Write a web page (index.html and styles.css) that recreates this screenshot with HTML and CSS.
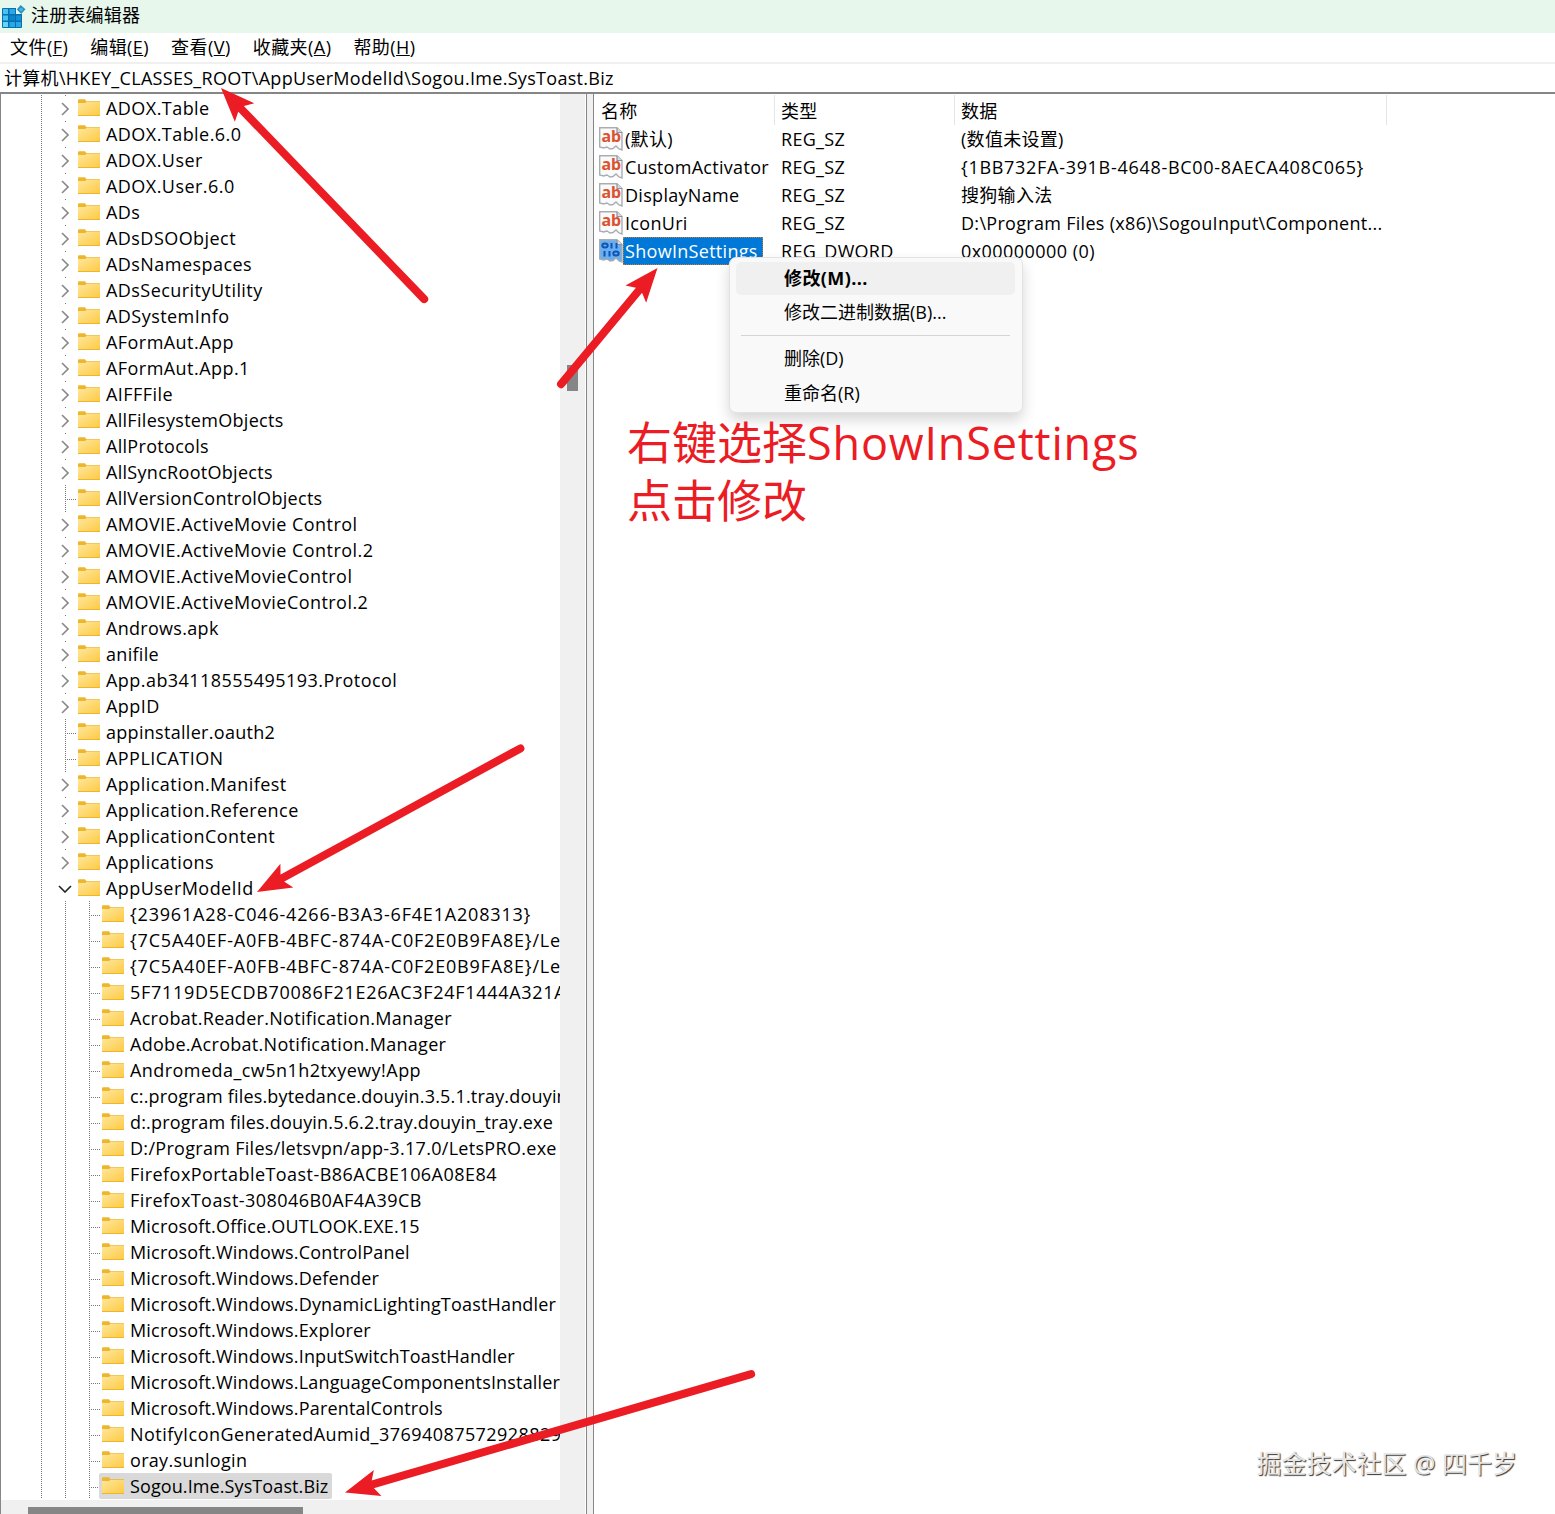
FILE: index.html
```html
<!DOCTYPE html>
<html lang="zh-CN">
<head>
    <meta charset="UTF-8">
    <meta name="viewport" content="width=device-width, initial-scale=1.0">
    <title>注册表编辑器</title>
    <link rel="stylesheet" href="styles.css">
</head>
<body>
    <svg class="defs" width="0" height="0">
        <defs>
            <linearGradient id="folder-fill" x1="0" y1="0" x2="1" y2="1">
                <stop offset="0" stop-color="#ffe79c" />
                <stop offset="1" stop-color="#fdca45" />
            </linearGradient>
            <symbol id="folder" viewBox="0 0 22 17">
                <path d="M0 1.5Q0 .3 1 .3H7L8.500 2.2H22V17H0Z" fill="#edb62c" />
                <path d="M0 4H7L8.500 3H22V16H0Z" fill="url(#folder-fill)" />
            </symbol>
            <symbol id="paper" viewBox="0 0 24 24">
                <path d="M.7 .7H18L23 5.5V23L20 22 17 19 14 21.5 11 22 8 20 4.5 21 .7 20Z" fill="currentColor" stroke="#a9adb2" stroke-width="1.4" />
                <path d="M18 1V5.5H23" fill="#ddd" stroke="#8e9398" stroke-width="1.2" />
            </symbol>
        </defs>
    </svg>

    <!-- 标题栏 -->
    <header class="titlebar">
        <svg class="app-icon" width="24" height="24" viewBox="0 0 24 24">
            <rect x="0" y="3" width="20" height="20" rx="1" fill="#0a6fb0" />
            <path d="M1 4H6V9H1ZM1 10.500H6V15.500H1Z" fill="#46c3f2" />
            <path d="M7.500 4H13V9H7.500ZM7.500 17H13V22H7.500ZM14 17H19V22H14Z" fill="#27a9e8" />
            <path d="M7.500 10.500H13V15.500H7.500Z" fill="#0c86cb" />
            <path d="M14 10.500H19V15.500H14Z" fill="#1291d6" />
            <path d="M1 17H6V22H1Z" fill="#62d6f8" />
            <path d="M14 2H21V9H14Z" fill="#e8f7ec" />
            <path d="M18.700 0L23.500 4.300 19.200 9 14.800 4.500Z" fill="#2b8fc2" />
            <path d="M19 2.500L21.300 4.500 19.200 6.500 17 4.500Z" fill="#4db9e2" />
        </svg>
        <h1>注册表编辑器</h1>
    </header>
    <nav class="menubar">
        <span>文件(<u>F</u>)</span>
        <span>编辑(<u>E</u>)</span>
        <span>查看(<u>V</u>)</span>
        <span>收藏夹(<u>A</u>)</span>
        <span>帮助(<u>H</u>)</span>
    </nav>
    <div class="address">计算机\HKEY_CLASSES_ROOT\AppUserModelId\Sogou.Ime.SysToast.Biz</div>

    <main>
        <!-- 左侧树 -->
        <section class="tree-pane">
            <div class="tree-body">
                <div id="tree"></div>
                <div class="scroll-v"><div class="thumb"></div></div>
            </div>
            <div class="scroll-h"><div class="thumb"></div></div>
        </section>
        <div class="splitter"></div>

        <!-- 右侧列表 -->
        <section class="values">
            <div class="row head"><span>名称</span><span>类型</span><span>数据</span></div>
            <div id="values"></div>

            <!-- 右键菜单 -->
            <div class="context-menu">
                <div class="item active">修改(M)...</div>
                <div class="item">修改二进制数据(B)...</div>
                <hr>
                <div class="item">删除(D)</div>
                <div class="item">重命名(R)</div>
            </div>
            <p class="note">右键选择<span class="note-latin">ShowInSettings</span><br>点击修改</p>
            <div class="watermark">掘金技术社区 @ 四千岁</div>
        </section>
    </main>

    <!-- 红色箭头 -->
    <svg class="arrows" width="1555" height="1514" viewBox="0 0 1555 1514">
        <g transform="translate(221 88) rotate(46.1)"><path d="M0 0L34-13.500 29-4V4L34 13.500Z" /><path d="M27 0H293" /></g>
        <g transform="translate(657.500 268) rotate(129.700)"><path d="M0 0L34-13.500 29-4V4L34 13.500Z" /><path d="M27 0H151" /></g>
        <g transform="translate(257 892) rotate(-28.600)"><path d="M0 0L34-13.500 29-4V4L34 13.500Z" /><path d="M27 0H300" /></g>
        <g transform="translate(345 1492.500) rotate(-16.250)"><path d="M0 0L34-13.500 29-4V4L34 13.500Z" /><path d="M27 0H423" /></g>
    </svg>

    <script>
        // '>' 可展开, 'v' 已展开, '-' 无子项
        const keys = [
            ['>', 'ADOX.Table'], ['>', 'ADOX.Table.6.0'], ['>', 'ADOX.User'], ['>', 'ADOX.User.6.0'],
            ['>', 'ADs'], ['>', 'ADsDSOObject'], ['>', 'ADsNamespaces'], ['>', 'ADsSecurityUtility'],
            ['>', 'ADSystemInfo'], ['>', 'AFormAut.App'], ['>', 'AFormAut.App.1'], ['>', 'AIFFFile'],
            ['>', 'AllFilesystemObjects'], ['>', 'AllProtocols'], ['>', 'AllSyncRootObjects'],
            ['-', 'AllVersionControlObjects'], ['>', 'AMOVIE.ActiveMovie Control'],
            ['>', 'AMOVIE.ActiveMovie Control.2'], ['>', 'AMOVIE.ActiveMovieControl'],
            ['>', 'AMOVIE.ActiveMovieControl.2'], ['>', 'Androws.apk'], ['>', 'anifile'],
            ['>', 'App.ab34118555495193.Protocol'], ['>', 'AppID'], ['-', 'appinstaller.oauth2'],
            ['-', 'APPLICATION'], ['>', 'Application.Manifest'], ['>', 'Application.Reference'],
            ['>', 'ApplicationContent'], ['>', 'Applications'], ['v', 'AppUserModelId']
        ];
        const children = [
            '{23961A28-C046-4266-B3A3-6F4E1A208313}',
            '{7C5A40EF-A0FB-4BFC-874A-C0F2E0B9FA8E}/Len',
            '{7C5A40EF-A0FB-4BFC-874A-C0F2E0B9FA8E}/Len',
            '5F7119D5ECDB70086F21E26AC3F24F1444A321A',
            'Acrobat.Reader.Notification.Manager',
            'Adobe.Acrobat.Notification.Manager',
            'Andromeda_cw5n1h2txyewy!App',
            'c:.program files.bytedance.douyin.3.5.1.tray.douyin',
            'd:.program files.douyin.5.6.2.tray.douyin_tray.exe',
            'D:/Program Files/letsvpn/app-3.17.0/LetsPRO.exe',
            'FirefoxPortableToast-B86ACBE106A08E84',
            'FirefoxToast-308046B0AF4A39CB',
            'Microsoft.Office.OUTLOOK.EXE.15',
            'Microsoft.Windows.ControlPanel',
            'Microsoft.Windows.Defender',
            'Microsoft.Windows.DynamicLightingToastHandler',
            'Microsoft.Windows.Explorer',
            'Microsoft.Windows.InputSwitchToastHandler',
            'Microsoft.Windows.LanguageComponentsInstaller',
            'Microsoft.Windows.ParentalControls',
            'NotifyIconGeneratedAumid_37694087572928829',
            'oray.sunlogin',
            'Sogou.Ime.SysToast.Biz'
        ];
        const folder = '<svg class="folder" width="22" height="17"><use href="#folder"/></svg>';
        const arrows = {
            '>': '<span class="guide closed"><svg width="8" height="14" viewBox="0 0 8 14"><path d="M1 1L7 7 1 13"/></svg></span>',
            'v': '<span class="guide open"><svg width="14" height="8" viewBox="0 0 14 8"><path d="M1 1L7 7 13 1"/></svg></span>',
            '-': '<span class="guide line leaf"></span>'
        };
        // 字距: 数字和大写较多的项略宽, 小写较多的项略窄
        function spacing(name) {
            if (/^\{/.test(name)) return ' guid';
            if (/^5F/.test(name)) return ' hash';
            if (/^(Microsoft|Sogou|[cd]:)/.test(name)) return ' narrow';
            if (/^(AD|AM|App|AP|AF|AI|Firefox|Notify|Andromeda)/.test(name)) return ' wide';
            return '';
        }
        let html = '';
        for (const [type, name] of keys) {
            html += `<div class="key"><span class="guide line"></span>${arrows[type]}<span class="label${spacing(name)}">${folder}${name}</span></div>`;
        }
        for (const name of children) {
            const selected = name.startsWith('Sogou') ? ' selected' : '';
            html += `<div class="key"><span class="guide line"></span><span class="guide line"></span><span class="guide line leaf"></span><span class="label${selected}${spacing(name)}">${folder}${name}</span></div>`;
        }
        document.getElementById('tree').innerHTML = html;

        const values = [
            ['(默认)', 'REG_SZ', '(数值未设置)'],
            ['CustomActivator', 'REG_SZ', '{1BB732FA-391B-4648-BC00-8AECA408C065}'],
            ['DisplayName', 'REG_SZ', '搜狗输入法'],
            ['IconUri', 'REG_SZ', 'D:\\Program Files (x86)\\SogouInput\\Component...'],
            ['ShowInSettings', 'REG_DWORD', '0x00000000 (0)']
        ];
        document.getElementById('values').innerHTML = values.map(([name, type, data]) => {
            const dword = type === 'REG_DWORD';
            const mark = dword
                ? '<g class="bits"><ellipse cx="6" cy="6.500" rx="2.700" ry="2"/><path d="M12.500 4V9.500M17.500 4V9.500M5.500 12V17.500M10.500 12V17.500"/><ellipse cx="17" cy="14.500" rx="2.700" ry="2"/></g>'
                : '<text x="2.500" y="15">ab</text>';
            return `<div class="row${dword ? ' selected' : ''}"><span class="name"><svg class="${dword ? 'num' : 'str'}" width="24" height="24" viewBox="0 0 24 24"><use href="#paper"/>${mark}</svg><b>${name}</b></span><span>${type}</span><span class="${data[0] === '{' ? 'hash' : dword ? 'wide' : ''}">${data}</span></div>`;
        }).join('');
    </script>
</body>
</html>
```
FILE: styles.css
```css
* {
    box-sizing: border-box;
}

body {
    margin: 0;
    height: 1514px;
    display: flex;
    flex-direction: column;
    position: relative;
    overflow: hidden;
    background-color: white;
    color: #000;
    font-family: "Open Sans", "Noto Sans CJK SC", sans-serif;
    font-size: 18px;
    letter-spacing: 0.3px;
    white-space: nowrap;
}

.defs {
    position: absolute;
}

.titlebar {
    display: flex;
    align-items: center;
    gap: 5px;
    height: 33px;
    padding-left: 2px;
    background-color: #e8f7ec;
}

h1 {
    margin: 0;
    padding-bottom: 3px;
    font-size: 18px;
    font-weight: 400;
    letter-spacing: 0.2px;
    line-height: 30px;
}

.menubar {
    display: flex;
    gap: 22px;
    height: 29px;
    padding-left: 10px;
    line-height: 29px;
    letter-spacing: 0.45px;
}

.address {
    height: 32px;
    padding-left: 4px;
    line-height: 29px;
    border-top: 2px solid #f0f0f0;
    border-bottom: 2px solid #868686;
}

main {
    flex: 1;
    display: flex;
    min-height: 0;
}

/* 树 */
.tree-pane {
    width: 586px;
    border-left: 1px solid #868686;
    display: flex;
    flex-direction: column;
}

.tree-body {
    display: flex;
    height: 1406px;
}

#tree {
    width: 559px;
    padding-top: 1px;
    overflow: hidden;
}

.scroll-v {
    width: 25px;
    padding: 271px 7px 0;
    background-color: #f0f0f0;
}

.scroll-v .thumb {
    width: 11px;
    height: 26px;
    background-color: #868686;
}

.scroll-h {
    flex: 1;
    width: 584px;
    padding: 7px 0 0 27px;
    background-color: #f0f0f0;
}

.scroll-h .thumb {
    width: 275px;
    height: 7px;
    background-color: #868686;
}

.splitter {
    width: 8px;
    background-color: #f0f0f0;
    border-left: 1px solid #868686;
    border-right: 1px solid #868686;
}

.key {
    display: flex;
    height: 26px;
    padding-left: 28px;
    line-height: 26px;
}

.guide {
    flex: none;
    display: flex;
    align-items: center;
    justify-content: center;
    width: 24px;
    height: 26px;
    background-repeat: no-repeat;
}

.line {
    background-image: linear-gradient(#777 50%, transparent 50%);
    background-size: 1px 2px;
    background-position: 12px 0;
    background-repeat: repeat-y;
}

.leaf {
    background-image: linear-gradient(#777 50%, transparent 50%), repeating-linear-gradient(90deg, #777 0 1px, transparent 1px 2px);
    background-size: 1px 2px, 10px 1px;
    background-position: 12px 0, 14px 14px;
    background-repeat: repeat-y, no-repeat;
}

.closed {
    background-image: linear-gradient(#777, #777);
    background-size: 1px 1px;
    background-position: 12px 0;
}

.guide svg {
    fill: none;
    stroke: #8a8a8a;
    stroke-width: 1.6;
    margin: 1px 1px 0 0;
}

.guide.open svg {
    stroke: #222;
}

.label {
    display: flex;
    align-items: center;
    gap: 6px;
    margin-left: -2px;
    padding: 0 4px 0 3px;
    border-radius: 2px;
}

.label.selected {
    background-color: #d9d9d9;
    letter-spacing: 0.1px;
}

.narrow {
    letter-spacing: 0.18px;
}

.wide {
    letter-spacing: 0.45px;
}

.guid {
    letter-spacing: 0.81px;
}

.hash {
    letter-spacing: 0.7px;
}

.folder {
    flex: none;
    margin-bottom: 2px;
}

/* 值列表 */
.values {
    flex: 1;
    position: relative;
}

.row {
    display: grid;
    grid-template-columns: 180px 180px 433px;
    height: 28px;
    line-height: 28px;
}

.row > span {
    padding-left: 7px;
}

.row > .name {
    display: flex;
    align-items: center;
    padding-left: 5px;
}

.head {
    height: 31px;
    line-height: 34px;
}

.head span {
    position: relative;
}

.head span::after {
    content: "";
    position: absolute;
    right: -1px;
    top: 1px;
    width: 1px;
    height: 30px;
    background-color: #e5e5e5;
}

.head span:last-child::after {
    right: 0;
}

.name b {
    font-weight: 400;
    padding: 0 5px 0 2px;
}

.selected b {
    background-color: #0078d7;
    color: white;
    outline: 1px dotted #c77a28;
    outline-offset: -1px;
}

.str {
    color: #fafafa;
}

.str text {
    font: bold 16px "Noto Sans", sans-serif;
    letter-spacing: 0;
    fill: #dc5230;
}

.num {
    color: #69aef0;
}

.bits {
    fill: none;
    stroke: #0f55b5;
    stroke-width: 2;
}

.context-menu {
    position: absolute;
    left: 135px;
    top: 163px;
    width: 294px;
    height: 156px;
    padding: 4px 7px 4px 6px;
    background-color: #f9f9f9;
    border: 1px solid #e3e3e3;
    border-radius: 7px;
    box-shadow: 0 7px 14px rgba(0, 0, 0, 0.16);
}

.item {
    height: 35px;
    padding-left: 48px;
    line-height: 35px;
    letter-spacing: 0;
    border-radius: 5px;
}

.active {
    height: 33px;
    line-height: 32px;
    background-color: #f0f0f0;
    font-weight: 700;
    letter-spacing: 0.4px;
}

hr {
    height: 1px;
    margin: 5px 5px;
    border: 0;
    background-color: #d4d4d4;
}

.note {
    position: absolute;
    left: 33px;
    top: 320px;
    margin: 0;
    color: #ec1c24;
    font-size: 45px;
    letter-spacing: 0;
    line-height: 58px;
}

.note-latin {
    letter-spacing: 0.8px;
}

.watermark {
    position: absolute;
    right: 38px;
    bottom: 34px;
    font-size: 25px;
    letter-spacing: 0;
    color: #e6e6e6;
    text-shadow: 1px 1px 1px #333;
}

.arrows {
    position: absolute;
    left: 0;
    top: 0;
    fill: #ec1c24;
    stroke: #ec1c24;
}

.arrows path:first-child {
    stroke: none;
}

.arrows path:last-child {
    stroke-width: 8;
    stroke-linecap: round;
}
```
